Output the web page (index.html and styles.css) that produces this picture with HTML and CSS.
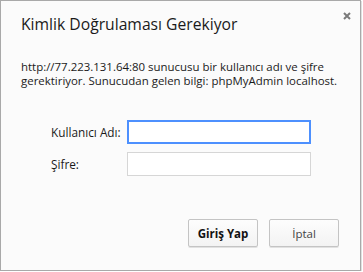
FILE: index.html
```html
<!DOCTYPE html>
<html lang="tr">
<head>
    <meta charset="UTF-8">
    <title>Kimlik Doğrulaması Gerekiyor</title>
    <link rel="stylesheet" href="styles.css">
</head>
<body>
    <div class="dialog">
        <div class="close" title="Kapat">
            <svg width="8" height="8" viewBox="0 0 8 8">
                <path d="M1 1 L7 7 M7 1 L1 7" stroke="#7a7a7a" stroke-width="2" />
            </svg>
        </div>

        <div class="title">Kimlik Doğrulaması Gerekiyor</div>

        <div class="message">
            http://77.223.131.64:80 sunucusu bir kullanıcı adı ve şifre<br>
            gerektiriyor. Sunucudan gelen bilgi: phpMyAdmin localhost.
        </div>

        <div class="form">
            <label for="user">Kullanıcı Adı:</label>
            <input type="text" id="user" class="focused">
            <label for="pass">Şifre:</label>
            <input type="password" id="pass">
        </div>

        <div class="buttons">
            <button class="btn primary">Giriş Yap</button>
            <button class="btn">İptal</button>
        </div>
    </div>
</body>
</html>
```

FILE: styles.css
```css
body {
    margin: 0;
    padding: 0;
    background: #ffffff;
    font-family: "Open Sans", "Noto Sans", sans-serif;
    color: #222;
}

.dialog {
    position: relative;
    width: 361px;
    height: 271px;
    box-sizing: border-box;
    border: 1px solid #a9a9a9;
    background: #fbfbfb;
    box-shadow: 1px 1px 0 rgba(0, 0, 0, 0.12);
    padding: 0 21px 23px 20px;
    display: flex;
    flex-direction: column;
}

.close {
    position: absolute;
    top: 11px;
    right: 9px;
    width: 8px;
    height: 8px;
    line-height: 0;
}

.title {
    font-size: 15.7px;
    line-height: 20px;
    margin-top: 13px;
    color: #1a1a1a;
}

.message {
    font-size: 11.45px;
    line-height: 14px;
    margin-top: 26px;
    color: #1a1a1a;
    white-space: nowrap;
}

.form {
    display: grid;
    grid-template-columns: 76px 184px;
    row-gap: 8px;
    align-items: center;
    margin-top: 32px;
    padding-left: 30px;
}

.form label {
    font-size: 11.8px;
    line-height: 14px;
    color: #1a1a1a;
}

.form input {
    width: 184px;
    height: 24px;
    box-sizing: border-box;
    border: 1px solid #d6d6d6;
    background: #fff;
    margin: 0;
    padding: 0 4px;
    outline: none;
}

.form input.focused {
    border: 2px solid #4d90fe;
}

.buttons {
    margin-top: auto;
    display: flex;
    justify-content: flex-end;
    gap: 11px;
}

.btn {
    width: 70px;
    height: 28px;
    box-sizing: border-box;
    border: 1px solid #c4c4c4;
    border-radius: 2px;
    background: linear-gradient(#fdfdfd, #f3f3f3);
    box-shadow: 0 1px 0 rgba(0, 0, 0, 0.1);
    font-family: "Open Sans", "Noto Sans", sans-serif;
    font-size: 11.5px;
    color: #444;
    padding: 0;
}

.btn.primary {
    font-weight: bold;
    color: #111;
}
```
